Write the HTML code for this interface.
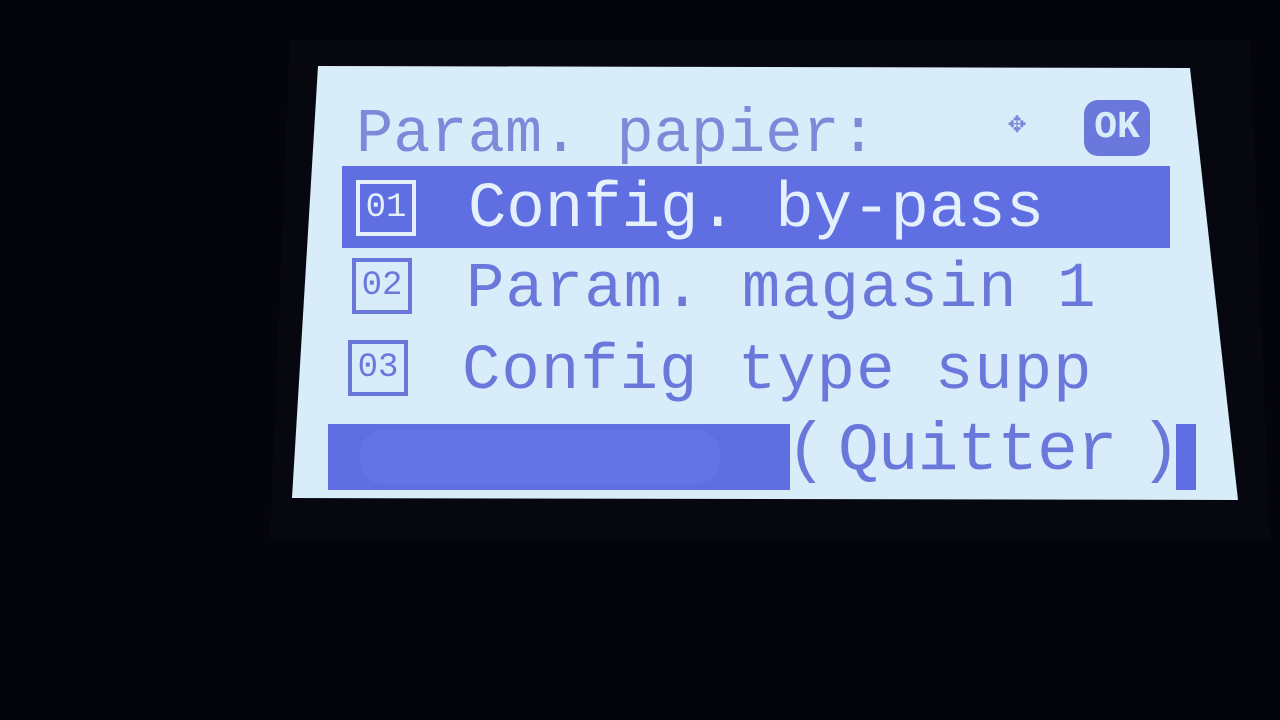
<!DOCTYPE html>
<html><head><meta charset="utf-8"><style>
html,body{margin:0;padding:0;width:1280px;height:720px;overflow:hidden;background:#04050a;}
.bezel{position:absolute;left:270px;top:40px;width:1000px;height:500px;background:#07080f;clip-path:polygon(2% 0,98% 0,100% 100%,0 100%);}
.screen{position:absolute;left:0;top:0;width:1280px;height:720px;background:#d9ecf9;
clip-path:polygon(318px 66px,1190px 68px,1238px 500px,292px 498px);}
.t{position:absolute;font-family:"Liberation Mono",monospace;color:#6a78dc;white-space:pre;line-height:1;}
.bar{position:absolute;background:#5f6fe2;}
.box{position:absolute;border:4px solid #6a78dc;width:60px;height:56px;box-sizing:border-box;font-family:"Liberation Mono",monospace;font-size:34px;color:#6a78dc;text-align:center;line-height:48px;}
</style></head><body>
<div class="bezel"></div>
<div class="screen">
  <div class="t" style="left:356px;top:104px;font-size:62px;color:#7d8ada;">Param. papier:</div>
  <div class="t" style="left:1008px;top:110px;font-size:30px;color:#7d8ada;">✥</div>
  <div style="position:absolute;left:1084px;top:100px;width:66px;height:56px;background:#6a78dc;border-radius:14px;color:#d9ecf9;font-family:'Liberation Mono',monospace;font-size:38px;font-weight:bold;text-align:center;line-height:56px;">OK</div>
  <div class="bar" style="left:342px;top:166px;width:828px;height:82px;"></div>
  <div class="box" style="left:356px;top:180px;border-color:#e4f0fb;color:#e4f0fb;">01</div>
  <div class="t" style="left:468px;top:178px;font-size:64px;color:#e4f0fb;">Config. by-pass</div>
  <div class="box" style="left:352px;top:258px;">02</div>
  <div class="t" style="left:466px;top:258px;font-size:64px;letter-spacing:1px;">Param. magasin 1</div>
  <div class="box" style="left:348px;top:340px;">03</div>
  <div class="t" style="left:462px;top:340px;font-size:64px;letter-spacing:1px;">Config type supp</div>
  <div class="bar" style="left:328px;top:424px;width:450px;height:66px;"></div>
  <div style="position:absolute;left:360px;top:430px;width:360px;height:54px;background:#6474e4;border-radius:24px;"></div>
  <div class="bar" style="left:728px;top:424px;width:62px;height:66px;"></div>
  <div class="t" style="left:786px;top:418px;font-size:68px;">(</div>
  <div class="t" style="left:838px;top:418px;font-size:68px;letter-spacing:-1px;">Quitter</div>
  <div class="t" style="left:1140px;top:418px;font-size:68px;">)</div>
  <div class="bar" style="left:1176px;top:424px;width:20px;height:66px;"></div>
</div>
</body></html>
